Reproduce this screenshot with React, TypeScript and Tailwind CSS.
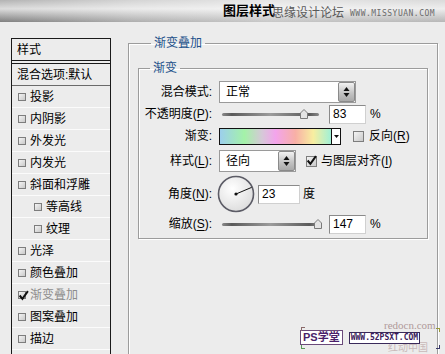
const font = "font-['Liberation_Sans','Noto_Sans_CJK_SC',sans-serif]";

type BoxProps = { checked?: boolean; size?: "sm" | "md" };

function CheckBox({ checked = false, size = "sm" }: BoxProps) {
  const dim = size === "sm" ? "h-[8px] w-[8px]" : "h-[11px] w-[11px]";
  return (
    <span
      className={`relative inline-block shrink-0 border border-[#7d7d7d] bg-[linear-gradient(135deg,#f4f4f4_0%,#c9c9c9_100%)] ${dim}`}>
      {checked ? (
        <svg viewBox="0 0 10 10" className="absolute -left-[1px] -top-[2px] h-[11px] w-[11px]">
          <path d="M1.5 5 L4 8 L9 1" fill="none" stroke="#111" strokeWidth="1.8" />
        </svg>
      ) : null}
    </span>
  );
}

function SpinArrow() {
  return (
    <span className="flex h-full w-[17px] shrink-0 items-center justify-center rounded-[2px] border border-[#8a8a8a] bg-[linear-gradient(180deg,#f2f2f2_0%,#c4c4c4_55%,#a9a9a9_100%)]">
      <svg viewBox="0 0 7 12" className="h-[12px] w-[7px]">
        <path d="M3.5 1 L6.5 5 H0.5 Z" fill="#111" />
        <path d="M3.5 11 L6.5 7 H0.5 Z" fill="#111" />
      </svg>
    </span>
  );
}

function Select({ value, width }: { value: string; width: string }) {
  return (
    <div className={`flex h-[22px] items-stretch border border-[#9a9a9a] bg-white ${width}`}>
      <span className="flex flex-1 items-center pl-[6px] text-[12px]">{value}</span>
      <SpinArrow />
    </div>
  );
}

function Slider({ pos }: { pos: number }) {
  return (
    <div className="relative flex h-[20px] w-[103px] items-center px-[3px]">
      <div className="h-[3px] w-full rounded-full bg-[linear-gradient(90deg,#8a8a8a,#5a5a5a_10%,#9c9c9c_50%,#5a5a5a_90%,#8a8a8a)]" />
      <svg
        viewBox="0 0 8 10"
        className="absolute top-[5px] h-[10px] w-[8px]"
        style={{ left: pos }}>
        <path d="M4 0.5 L7.5 4 V9.5 H0.5 V4 Z" fill="#e4e4e4" stroke="#7a7a7a" strokeWidth="1" />
      </svg>
    </div>
  );
}

function NumField({ value, width }: { value: string; width: string }) {
  return (
    <span
      className={`flex h-[19px] items-center border border-t-[#8a8a8a] border-l-[#8a8a8a] border-b-[#d0d0d0] border-r-[#d0d0d0] bg-white pl-[3px] text-[12px] ${width}`}>
      {value}
    </span>
  );
}

function Key({ children }: { children: string }) {
  return <span className="underline underline-offset-2">{children}</span>;
}

function Dial() {
  return (
    <svg viewBox="0 0 38 38" className="h-[38px] w-[38px] shrink-0">
      <defs>
        <radialGradient id="dialFill" cx="40%" cy="35%" r="70%">
          <stop offset="0%" stopColor="#ffffff" />
          <stop offset="100%" stopColor="#dcdcdc" />
        </radialGradient>
      </defs>
      <circle cx="19" cy="19" r="17.5" fill="url(#dialFill)" stroke="#5c5c66" strokeWidth="1.6" />
      <line x1="19" y1="19" x2="34.6" y2="12.4" stroke="#111" strokeWidth="1" />
      <circle cx="19" cy="19" r="1.6" fill="#111" />
    </svg>
  );
}

const items: { label: string; indent?: boolean; checked?: boolean; dim?: boolean }[] = [
  { label: "投影" },
  { label: "内阴影" },
  { label: "外发光" },
  { label: "内发光" },
  { label: "斜面和浮雕" },
  { label: "等高线", indent: true },
  { label: "纹理", indent: true },
  { label: "光泽" },
  { label: "颜色叠加" },
  { label: "渐变叠加", checked: true, dim: true },
  { label: "图案叠加" },
  { label: "描边" },
];

function StyleList() {
  return (
    <div className="mt-[16px] h-[330px] w-[100px] shrink-0 border border-[#1a1a1a] text-[12px]">
      <div className="flex h-[21px] items-center pl-[5px]">样式</div>
      <div className="border-b-[4px] border-double border-[#1a1a1a]" />
      <div className="flex h-[22px] items-center border-b border-[#6a6a6a] pl-[5px]">混合选项:默认</div>
      {items.map((item) => (
        <div
          key={item.label}
          className={`flex h-[22px] items-center gap-[4px] border-b border-[#fbfbfb] ${
            item.indent ? "pl-[22px]" : "pl-[6px]"
          } ${item.dim ? "text-[#8c8c8c]" : "text-black"}`}>
          <CheckBox checked={item.checked} />
          <span>{item.label}</span>
        </div>
      ))}
    </div>
  );
}

function Row({ label, className, children }: { label: React.ReactNode; className: string; children: React.ReactNode }) {
  return (
    <div className={`flex items-center ${className}`}>
      <span className="w-[73px] shrink-0 text-right text-[12px]">{label}</span>
      <div className="ml-[7px] flex items-center">{children}</div>
    </div>
  );
}

function GradientPanel() {
  return (
    <fieldset className="ml-[17px] mt-[13px] h-[330px] w-[310px] shrink-0 border border-[#9c9c9c] px-[9px] pt-[9px] shadow-[1px_1px_0_#fff,inset_1px_1px_0_#fff]">
      <legend className="ml-[13px] px-[3px] text-[12px] leading-[16px] text-[#22508a]">渐变叠加</legend>
      <fieldset className="w-[290px] border border-[#9c9c9c] pb-[4px] pt-[5px] shadow-[1px_1px_0_#fff,inset_1px_1px_0_#fff]">
        <legend className="ml-[11px] px-[3px] text-[12px] leading-[16px] text-[#22508a]">渐变</legend>

        <Row label="混合模式:" className="h-[22px]">
          <Select value="正常" width="w-[137px]" />
        </Row>

        <Row label={<>不透明度(<Key>P</Key>):</>} className="mt-[1px] h-[20px]">
          <Slider pos={81} />
          <span className="ml-[7px]">
            <NumField value="83" width="w-[37px]" />
          </span>
          <span className="ml-[4px] text-[12px]">%</span>
        </Row>

        <Row label="渐变:" className="mt-[3px] h-[18px]">
          <div className="flex h-[17px] w-[122px] border border-[#111]">
            <div className="flex-1 bg-[linear-gradient(90deg,#9ccfec_0%,#a4f2a8_22%,#d6c8d8_38%,#f3a4ec_50%,#f8b0a6_68%,#f8eea0_84%,#a0f0d6_100%)]" />
            <span className="flex w-[9px] items-center justify-center border-l border-[#111] bg-white">
              <svg viewBox="0 0 5 3" className="h-[3px] w-[5px]">
                <path d="M0 0 H5 L2.5 3 Z" fill="#111" />
              </svg>
            </span>
          </div>
          <span className="ml-[12px] flex">
            <CheckBox size="md" />
          </span>
          <span className="ml-[5px] text-[12px]">
            反向(<Key>R</Key>)
          </span>
        </Row>

        <Row label={<>样式(<Key>L</Key>):</>} className="mt-[5px] h-[22px]">
          <Select value="径向" width="w-[77px]" />
          <span className="ml-[10px] flex">
            <CheckBox size="md" checked />
          </span>
          <span className="ml-[4px] text-[12px]">
            与图层对齐(<Key>I</Key>)
          </span>
        </Row>

        <Row label={<>角度(<Key>N</Key>):</>} className="mt-[2px] h-[40px]">
          <span className="-ml-[2px] flex">
            <Dial />
          </span>
          <span className="ml-[3px]">
            <NumField value="23" width="w-[42px]" />
          </span>
          <span className="ml-[3px] text-[12px]">度</span>
        </Row>

        <Row label={<>缩放(<Key>S</Key>):</>} className="h-[20px]">
          <Slider pos={95} />
          <span className="ml-[7px]">
            <NumField value="147" width="w-[37px]" />
          </span>
          <span className="ml-[4px] text-[12px]">%</span>
        </Row>
      </fieldset>
    </fieldset>
  );
}

function TitleBar() {
  return (
    <div className="flex h-[22px] items-center bg-[linear-gradient(90deg,#8a8a8a_0%,#bdbdbd_30%,#d8d8d8_60%,#c6c6c6_100%)] pl-[223px]">
      <div className="absolute left-0 top-0 h-[22px] w-full bg-[linear-gradient(180deg,rgba(255,255,255,0.35)_0%,rgba(255,255,255,0.7)_40%,rgba(0,0,0,0.08)_100%)]" />
      <span className="relative text-[13px] font-bold text-black">图层样式</span>
      <span className="relative -ml-[3px] mt-[4px] text-[12px] text-[#5a5a5a]">思缘设计论坛</span>
      <span className="relative ml-[6px] mt-[5px] font-['DejaVu_Sans_Mono',monospace] text-[8px] tracking-[0.5px] text-[#6a6a6a]">
        WWW.MISSYUAN.COM
      </span>
    </div>
  );
}

export default function App() {
  return (
    <div className={`relative h-[354px] w-[445px] overflow-hidden bg-[#ececec] text-black ${font}`}>
      <TitleBar />
      <div className="flex pl-[11px]">
        <StyleList />
        <GradientPanel />
      </div>

      {/* site watermarks in the lower right corner */}
      <div className="absolute left-[384px] top-[319px] font-['Liberation_Serif',serif] text-[11px] leading-[12px] text-[#b09a9a]">
        redocn.com
      </div>
      <div className="absolute left-[388px] top-[342px] text-[10px] leading-[11px] text-[#c9b9b9]">红动中国</div>
      <div className="absolute left-[300px] top-[330px] flex items-center gap-[6px]">
        <span className="border border-[#6a4a7a] bg-white px-[2px] text-[11px] font-bold leading-[13px] text-[#4a1f6a]">
          PS学堂
        </span>
        <span className="border border-[#3a2a5a] bg-white px-[1px] font-['DejaVu_Sans_Mono',monospace] text-[8px] font-bold leading-[10px] text-[#3a1a5a]">
          WWW.52PSXT.COM
        </span>
      </div>
      <span className="absolute left-[301px] top-[327px] h-[4px] w-[4px] border-l border-t border-[#8a6a6a]" />
      <span className="absolute left-[301px] top-[345px] h-[4px] w-[4px] border-b border-l border-[#5a9a5a]" />
      <span className="absolute left-[436px] top-[328px] h-[4px] w-[4px] border-r border-t border-[#9a9a3a]" />
      <span className="absolute left-[436px] top-[345px] h-[4px] w-[4px] border-b border-r border-[#3a3a6a]" />
    </div>
  );
}
